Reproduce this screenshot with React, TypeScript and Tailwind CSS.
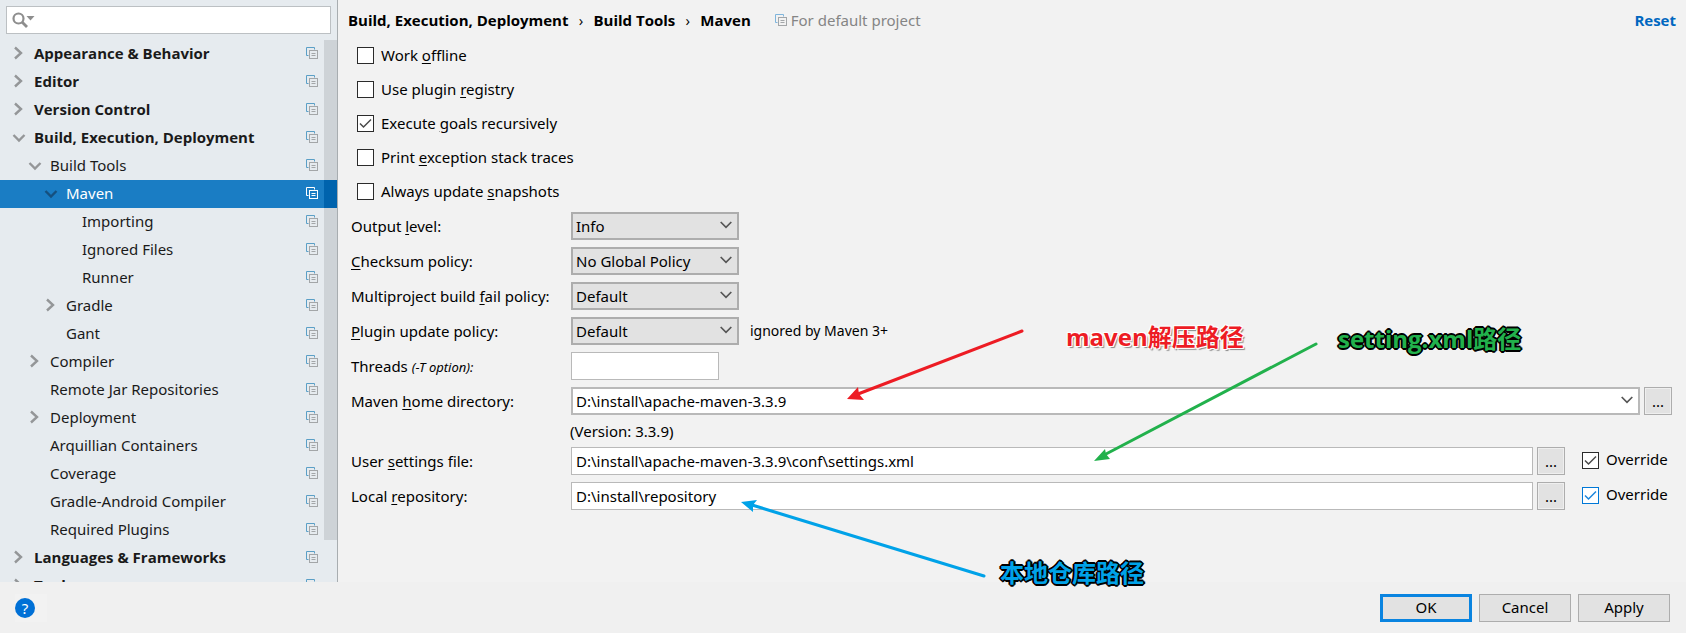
import React, { useState } from 'react';

type Node = { label: string; depth: number; arrow?: 'open' | 'closed'; bold?: boolean; selected?: boolean };

const tree: Node[] = [
  { label: 'Appearance & Behavior', depth: 0, arrow: 'closed', bold: true },
  { label: 'Editor', depth: 0, arrow: 'closed', bold: true },
  { label: 'Version Control', depth: 0, arrow: 'closed', bold: true },
  { label: 'Build, Execution, Deployment', depth: 0, arrow: 'open', bold: true },
  { label: 'Build Tools', depth: 1, arrow: 'open' },
  { label: 'Maven', depth: 2, arrow: 'open', selected: true },
  { label: 'Importing', depth: 3 },
  { label: 'Ignored Files', depth: 3 },
  { label: 'Runner', depth: 3 },
  { label: 'Gradle', depth: 2, arrow: 'closed' },
  { label: 'Gant', depth: 2 },
  { label: 'Compiler', depth: 1, arrow: 'closed' },
  { label: 'Remote Jar Repositories', depth: 1 },
  { label: 'Deployment', depth: 1, arrow: 'closed' },
  { label: 'Arquillian Containers', depth: 1 },
  { label: 'Coverage', depth: 1 },
  { label: 'Gradle-Android Compiler', depth: 1 },
  { label: 'Required Plugins', depth: 1 },
  { label: 'Languages & Frameworks', depth: 0, arrow: 'closed', bold: true },
  { label: 'Tools', depth: 0, arrow: 'closed', bold: true },
];

const indent = ['pl-3', 'pl-7', 'pl-11', 'pl-15'];

function Chevron({ open, selected }: { open: boolean; selected?: boolean }) {
  return (
    <svg width="14" height="14" viewBox="0 0 14 14" fill="none" stroke={selected ? '#15507f' : '#949698'} strokeWidth="2.4" aria-hidden="true">
      {open ? <path d="M1.5 5 7 10.500l5.500-5.500" /> : <path d="M3 1.500 9 7l-6 5.500" />}
    </svg>
  );
}

function CopyIcon({ selected, pale }: { selected?: boolean; pale?: boolean }) {
  const back = selected ? '#ffffff' : pale ? '#7fb5dc' : '#5b9fc6';
  const front = selected ? '#ffffff' : '#a3a6a8';
  return (
    <svg width="12" height="12" viewBox="0 0 12 12" fill="none" className="shrink-0" aria-hidden="true">
      <path d="M2.500 8.500h-2v-8h8v2" stroke={back} />
      <rect x="3.500" y="3.500" width="8" height="8" stroke={front} />
      <path d="M5.500 6.500h4M5.500 8.500h4" stroke={front} />
    </svg>
  );
}

function DropArrow() {
  return (
    <svg width="12" height="8" viewBox="0 0 12 8" fill="none" stroke="#555" strokeWidth="1.700" className="pointer-events-none absolute right-[7px] top-[9px]" aria-hidden="true">
      <path d="M.7 1 6 6.300 11.300 1" />
    </svg>
  );
}

function Check({ id, children, checked = false, blue = false }: { id: string; children: React.ReactNode; checked?: boolean; blue?: boolean }) {
  const [on, setOn] = useState(checked);
  return (
    <div className="flex h-[17px] items-center gap-[7px]">
      <span className="relative flex h-[17px] w-[17px] shrink-0">
        <input
          id={id}
          type="checkbox"
          checked={on}
          onChange={() => setOn(!on)}
          className={`h-full w-full appearance-none border bg-white ${blue ? 'border-[#0078d7]' : 'border-[#2b2b2b]'}`}
        />
        {on && (
          <svg viewBox="0 0 17 17" fill="none" stroke={blue ? '#1c86dc' : '#4a4a4a'} strokeWidth="1.500" className="pointer-events-none absolute inset-0" aria-hidden="true">
            <path d="M3 8.500 6.500 12 14 4.500" />
          </svg>
        )}
      </span>
      <label htmlFor={id} className="pb-0.5 leading-5">{children}</label>
    </div>
  );
}

function U({ children }: { children: string }) {
  return <span className="underline underline-offset-2">{children}</span>;
}

function Choice({ id, value }: { id: string; value: string }) {
  return (
    <div className="relative h-7 w-[168px]">
      <select id={id} defaultValue={value} className="h-full w-full appearance-none border-2 border-[#adadad] bg-[#e2e2e2] px-[3px] leading-5">
        <option>{value}</option>
      </select>
      <DropArrow />
    </div>
  );
}

const field = 'h-7 min-w-0 border border-[#b9b9b9] bg-white px-1';

function Browse({ label }: { label: string }) {
  return (
    <button aria-label={label} className="h-7 w-7 shrink-0 border border-[#adadad] bg-[#e2e2e2] leading-5 shadow-[inset_0_0_0_1px_#efefef]">...</button>
  );
}

function Row({ id, label, children }: { id: string; label: React.ReactNode; children: React.ReactNode }) {
  return (
    <div className="flex h-7 items-center">
      <label htmlFor={id} className="w-[220px] shrink-0 whitespace-nowrap">{label}</label>
      {children}
    </div>
  );
}

function Annotations() {
  return (
    <div className="pointer-events-none absolute inset-0 font-['Open_Sans','Noto_Sans_CJK_SC',sans-serif] text-2xl font-bold">
      <svg width="1686" height="633" className="absolute left-0 top-0" strokeWidth="3" strokeLinecap="round" aria-hidden="true">
        <g stroke="#ed1c24" fill="#ed1c24">
          <path d="M1022 331 858 394" />
          <path stroke="none" d="M847 399 858 387 859 394 864 400Z" />
        </g>
        <g stroke="#22b14c" fill="#22b14c">
          <path d="M1316 344 1106 454" />
          <path stroke="none" d="M1094 461 1105 449 1106 454 1110 459Z" />
        </g>
        <g stroke="#00a2e8" fill="#00a2e8">
          <path d="M984 576 752 505" />
          <path stroke="none" d="M741 502 757 500 753 505 753 512Z" />
        </g>
      </svg>
      <span className="absolute left-[1066px] top-[321px] whitespace-nowrap text-[#ed1c24] [text-shadow:1px_1px_#fff,-1px_1px_#fff,1px_-1px_#fff,-1px_-1px_#fff,2px_2px_1px_#888]">maven解压路径</span>
      <span className="absolute left-[1338px] top-[323px] whitespace-nowrap text-[#22b14c] [text-shadow:1px_1px_#000,-1px_1px_#000,1px_-1px_#000,-1px_-1px_#000,2px_0_#000,-2px_0_#000,0_2px_#000,0_-2px_#000]">setting.xml路径</span>
      <span className="absolute left-[1000px] top-[557px] whitespace-nowrap text-[#00a2e8] [text-shadow:1px_1px_#000,-1px_1px_#000,1px_-1px_#000,-1px_-1px_#000,2px_0_#000,-2px_0_#000,0_2px_#000,0_-2px_#000]">本地仓库路径</span>
    </div>
  );
}

const bold = "font-['Open_Sans',sans-serif] font-bold";

export default function App() {
  return (
    <div className="relative flex h-screen flex-col overflow-hidden bg-[#f0f0f0] font-['Noto_Sans','Noto_Sans_CJK_SC',sans-serif] text-[15px] leading-5 text-black">
      <div className="flex min-h-0 flex-1">
        <aside className="flex w-[338px] shrink-0 flex-col border-r border-[#a8adb0] bg-[#e6ebef] pt-1.5 text-[#1a1a1a]">
          <div className="mx-1.5 mb-1.5 flex h-7 shrink-0 items-center border border-[#bcc0c3] bg-white pl-1">
            <svg width="24" height="18" viewBox="0 0 24 18" fill="none" aria-hidden="true">
              <circle cx="7.500" cy="7.500" r="5" stroke="#8e8e8e" strokeWidth="2.200" />
              <path d="m11 11 5 5" stroke="#8e8e8e" strokeWidth="2.800" />
              <path d="M15.500 5h8l-4 4.500Z" fill="#8e8e8e" />
            </svg>
            <input aria-label="Search settings" className="min-w-0 flex-1 bg-transparent outline-none" />
          </div>
          <div className="relative min-h-0 flex-1 overflow-hidden">
            <ul>
              {tree.map((n) => (
                <li key={n.label} className={`flex h-7 items-center pb-0.5 pr-[19px] ${indent[n.depth]} ${n.selected ? 'bg-[#1a7dc4] text-white' : ''}`}>
                  <span className="flex w-[22px] shrink-0 items-center">
                    {n.arrow && <Chevron open={n.arrow === 'open'} selected={n.selected} />}
                  </span>
                  <span className={`flex-1 whitespace-nowrap ${n.bold ? bold : ''}`}>{n.label}</span>
                  <CopyIcon selected={n.selected} />
                </li>
              ))}
            </ul>
            <div className="absolute right-0 top-0 h-[500px] w-[13px] bg-[#ced3d7]" />
            <div className="absolute right-0 top-[140px] h-7 w-[13px] bg-[#0063ad]" />
          </div>
        </aside>

        <main className="flex min-w-0 flex-1 flex-col bg-[#f2f2f2] pr-3.5">
          <header className={`flex h-10 items-center pl-2.5 ${bold}`}>
            <span>Build, Execution, Deployment</span>
            <span className="w-[25px] text-center font-normal">›</span>
            <span>Build Tools</span>
            <span className="w-[25px] text-center font-normal">›</span>
            <span>Maven</span>
            <span className="ml-6 flex items-center gap-1 font-['Noto_Sans',sans-serif] font-normal text-[#858585]">
              <CopyIcon pale />
              For default project
            </span>
            <a href="#reset" className="ml-auto -mr-1 text-[#0067c0]">Reset</a>
          </header>

          <div className="flex flex-col gap-[17px] pl-[19px] pt-[7px]">
            <Check id="offline">Work <U>o</U>ffline</Check>
            <Check id="registry">Use plugin <U>r</U>egistry</Check>
            <Check id="recursive" checked>Execute <U>g</U>oals recursively</Check>
            <Check id="traces">Print <U>e</U>xception stack traces</Check>
            <Check id="snapshots">Always update <U>s</U>napshots</Check>
          </div>

          <div className="mt-3 flex flex-col gap-[7px] pl-[13px]">
            <Row id="output" label={<>Output <U>l</U>evel:</>}><Choice id="output" value="Info" /></Row>
            <Row id="checksum" label={<><U>C</U>hecksum policy:</>}><Choice id="checksum" value="No Global Policy" /></Row>
            <Row id="fail" label={<>Multiproject build <U>f</U>ail policy:</>}><Choice id="fail" value="Default" /></Row>
            <Row id="update" label={<><U>P</U>lugin update policy:</>}>
              <Choice id="update" value="Default" />
              <span className="ml-[11px] text-sm">ignored by Maven 3+</span>
            </Row>
            <Row id="threads" label={<>Threads <i className="text-[13px]">(-T option):</i></>}>
              <input id="threads" className={`${field} w-[148px]`} />
            </Row>
            <Row id="home" label={<>Maven <U>h</U>ome directory:</>}>
              <div className="relative mr-1 h-7 min-w-0 flex-1">
                <input id="home" defaultValue="D:\install\apache-maven-3.3.9" className="h-full w-full border-2 border-[#b9b9b9] bg-white px-[3px]" />
                <DropArrow />
              </div>
              <Browse label="Browse Maven home" />
            </Row>
          </div>
          <div className="flex h-8 items-center pl-[232px]">(Version: 3.3.9)</div>
          <div className="flex flex-col gap-[7px] pl-[13px]">
            <Row id="settings" label={<>User <U>s</U>ettings file:</>}>
              <input id="settings" defaultValue="D:\install\apache-maven-3.3.9\conf\settings.xml" className={`${field} mr-1 flex-1`} />
              <Browse label="Browse settings file" />
              <div className="ml-[17px] w-[90px] shrink-0 pb-0.5"><Check id="override-settings" checked>Override</Check></div>
            </Row>
            <Row id="repo" label={<>Local <U>r</U>epository:</>}>
              <input id="repo" defaultValue="D:\install\repository" className={`${field} mr-1 flex-1`} />
              <Browse label="Browse local repository" />
              <div className="ml-[17px] w-[90px] shrink-0 pb-0.5"><Check id="override-repo" checked blue>Override</Check></div>
            </Row>
          </div>
        </main>
      </div>

      <footer className="flex h-[51px] shrink-0 items-center gap-[7px] pl-[15px] pr-4">
        <span className="mr-auto flex h-7 w-8 items-center bg-[#f2f2f2]">
          <button aria-label="Help" className="flex h-5 w-5 items-center justify-center rounded-full bg-[#0070d6] text-white">?</button>
        </span>
        <button className="h-7 w-[92px] border-3 border-[#0a84e0] bg-[#e2e2e2] pb-0.5">OK</button>
        <button className="h-7 w-[92px] border border-[#adadad] bg-[#e2e2e2] pb-0.5">Cancel</button>
        <button className="h-7 w-[92px] border border-[#adadad] bg-[#e2e2e2] pb-0.5">Apply</button>
      </footer>
      <Annotations />
    </div>
  );
}
